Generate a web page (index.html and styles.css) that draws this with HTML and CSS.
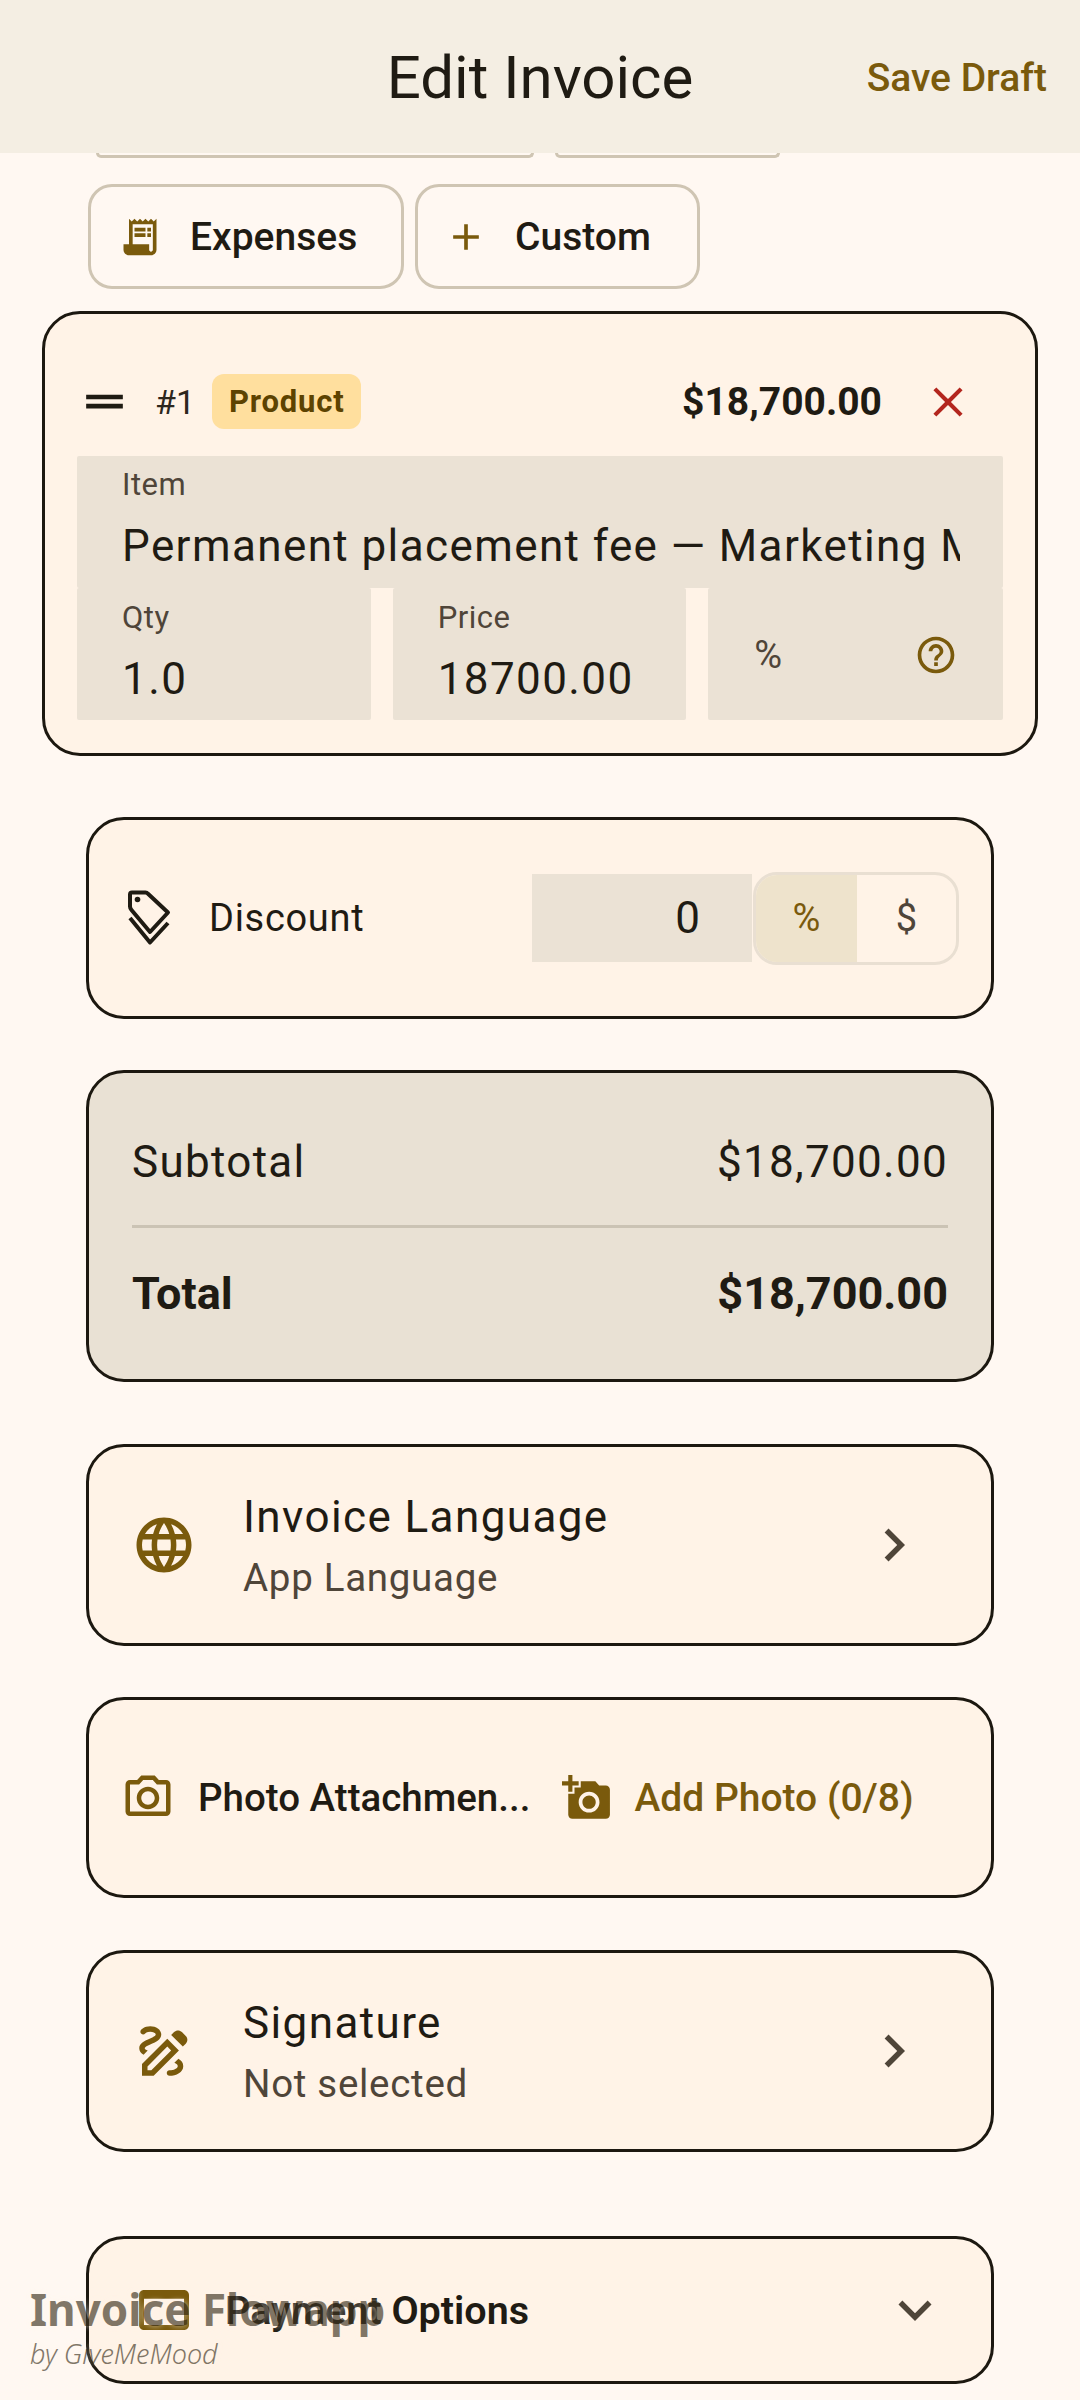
FILE: index.html
```html
<!DOCTYPE html>
<html lang="en">
<head>
    <meta charset="UTF-8">
    <meta name="viewport" content="width=device-width, initial-scale=1.0">
    <title>Edit Invoice</title>
    <link rel="stylesheet" href="styles.css">
</head>
<body>
    <header class="app-bar">
        <h1>Edit Invoice</h1>
        <span class="save-draft">Save Draft</span>
    </header>

    <main class="content">
        <!-- first chip row is scrolled under the app bar -->
        <div class="chip-stubs">
            <span class="stub stub-wide"></span>
            <span class="stub stub-small"></span>
        </div>

        <div class="chips">
            <div class="chip chip-expenses">
                <svg class="chip-icon" viewBox="0 0 24 24"><path d="M19.5 3.5 18 2l-1.5 1.5L15 2l-1.5 1.5L12 2l-1.5 1.5L9 2 7.5 3.5 6 2v14H3v3c0 1.66 1.34 3 3 3h12c1.66 0 3-1.34 3-3V2l-1.5 1.5zM19 19c0 .55-.45 1-1 1s-1-.45-1-1v-3H8V5h11v14z"/><path d="M9 7h6v2H9zm7 0h2v2h-2zM9 10h6v2H9zm7 0h2v2h-2z"/></svg>
                <span>Expenses</span>
            </div>
            <div class="chip chip-custom">
                <svg class="chip-icon" viewBox="0 0 24 24"><path d="M19 13h-6v6h-2v-6H5v-2h6V5h2v6h6v2z"/></svg>
                <span>Custom</span>
            </div>
        </div>

        <section class="card item-card">
            <div class="item-top">
                <svg class="drag-icon" viewBox="0 0 24 24"><path d="M20 9H4v2h16V9zM4 15h16v-2H4v2z"/></svg>
                <span class="item-num">#1</span>
                <span class="badge">Product</span>
                <span class="item-amount">$18,700.00</span>
                <svg class="close-icon" viewBox="0 0 24 24"><path d="M19 6.41 17.59 5 12 10.59 6.41 5 5 6.41 10.59 12 5 17.59 6.41 19 12 13.41 17.59 19 19 17.59 13.41 12z"/></svg>
            </div>
            <div class="field field-item">
                <label>Item</label>
                <div class="field-value">Permanent placement fee — Marketing Manager</div>
            </div>
            <div class="field-row">
                <div class="field">
                    <label>Qty</label>
                    <div class="field-value">1.0</div>
                </div>
                <div class="field">
                    <label>Price</label>
                    <div class="field-value">18700.00</div>
                </div>
                <div class="field field-tax">
                    <span>%</span>
                    <svg class="help-icon" viewBox="0 0 24 24"><path d="M11 18h2v-2h-2v2zm1-16C6.48 2 2 6.48 2 12s4.48 10 10 10 10-4.48 10-10S17.52 2 12 2zm0 18c-4.41 0-8-3.59-8-8s3.59-8 8-8 8 3.59 8 8-3.59 8-8 8zm0-14c-2.21 0-4 1.79-4 4h2c0-1.1.9-2 2-2s2 .9 2 2c0 2-3 1.75-3 5h2c0-2.25 3-2.5 3-5 0-2.21-1.79-4-4-4z"/></svg>
                </div>
            </div>
        </section>

        <section class="card row-card discount-card">
            <svg class="tag-icon" viewBox="0 0 48 60"><path d="M5 6.5c0-1.2.8-2 2-2h13.5c1 0 1.800.4 2.500 1.200L43 24.500 25 44 6.500 22c-1-1.200-1.500-2.200-1.500-3.500z"/><path d="M5 30 25 54.500 43 35"/><circle cx="12.500" cy="11.500" r="2.800"/></svg>
            <span class="discount-label">Discount</span>
            <div class="discount-input">0</div>
            <div class="toggle">
                <span class="toggle-on">%</span>
                <span class="toggle-off">$</span>
            </div>
        </section>

        <section class="card summary-card">
            <div class="summary-row">
                <span>Subtotal</span>
                <span>$18,700.00</span>
            </div>
            <div class="summary-line"></div>
            <div class="summary-row summary-total">
                <span>Total</span>
                <span>$18,700.00</span>
            </div>
        </section>

        <section class="card row-card language-card">
            <svg class="lead-icon" viewBox="0 0 24 24"><path d="M11.99 2C6.47 2 2 6.48 2 12s4.470 10 9.990 10C17.520 22 22 17.520 22 12S17.520 2 11.990 2zm6.930 6h-2.950c-.32-1.250-.78-2.450-1.380-3.560 1.840.63 3.370 1.910 4.330 3.560zM12 4.040c.83 1.200 1.480 2.530 1.910 3.960h-3.820c.43-1.430 1.080-2.760 1.910-3.960zM4.260 14C4.100 13.360 4 12.690 4 12s.1-1.360.26-2h3.380c-.08.66-.14 1.320-.14 2 0 .68.06 1.340.14 2H4.260zm.82 2h2.950c.32 1.250.78 2.450 1.380 3.560-1.840-.63-3.370-1.900-4.330-3.560zm2.950-8H5.080c.96-1.660 2.490-2.930 4.330-3.560C8.810 5.550 8.350 6.750 8.030 8zM12 19.960c-.83-1.200-1.480-2.530-1.910-3.960h3.820c-.43 1.430-1.080 2.760-1.910 3.960zM14.340 14H9.660c-.09-.66-.16-1.320-.16-2 0-.68.07-1.350.16-2h4.680c.09.65.16 1.320.16 2 0 .68-.07 1.340-.16 2zm.25 5.560c.6-1.110 1.060-2.310 1.380-3.560h2.950c-.96 1.650-2.490 2.930-4.330 3.560zM16.360 14c.08-.66.14-1.320.14-2 0-.68-.06-1.340-.14-2h3.380c.16.64.26 1.310.26 2s-.1 1.360-.26 2h-3.380z"/></svg>
            <div class="row-text">
                <div class="row-title">Invoice Language</div>
                <div class="row-sub">App Language</div>
            </div>
            <svg class="chevron" viewBox="0 0 24 24"><path d="M10 6 8.590 7.410 13.170 12l-4.580 4.590L10 18l6-6z"/></svg>
        </section>

        <section class="card row-card photo-card">
            <svg class="camera-icon" viewBox="0 0 24 24"><path d="M14.120 4l1.830 2H20v12H4V6h4.050l1.830-2h4.240M15 2H9L7.170 4H4c-1.100 0-2 .9-2 2v12c0 1.100.9 2 2 2h16c1.100 0 2-.9 2-2V6c0-1.100-.9-2-2-2h-3.170L15 2zm-3 5c-2.760 0-5 2.240-5 5s2.240 5 5 5 5-2.240 5-5-2.240-5-5-5zm0 8c-1.650 0-3-1.350-3-3s1.350-3 3-3 3 1.350 3 3-1.350 3-3 3z"/></svg>
            <span class="photo-label">Photo Attachmen...</span>
            <svg class="add-photo-icon" viewBox="0 0 24 24"><path d="M3 4V1h2v3h3v2H5v3H3V6H0V4h3zm3 6V7h3V4h7l1.830 2H21c1.100 0 2 .9 2 2v12c0 1.100-.9 2-2 2H5c-1.100 0-2-.9-2-2V10h3zm7 9c2.760 0 5-2.240 5-5s-2.240-5-5-5-5 2.240-5 5 2.240 5 5 5zm-3.200-5c0 1.770 1.430 3.200 3.200 3.200s3.200-1.430 3.200-3.200-1.430-3.200-3.200-3.200-3.200 1.430-3.200 3.200z"/></svg>
            <span class="add-photo">Add Photo (0/8)</span>
        </section>

        <section class="card row-card signature-card">
            <svg class="lead-icon" viewBox="0 0 24 24"><path fill-rule="evenodd" d="M18.850 10.390l1.060-1.060c.78-.78.78-2.050 0-2.830L18.500 5.090c-.78-.78-2.050-.78-2.830 0l-1.060 1.060 4.240 4.240zm-5.660-2.830L4 16.760V21h4.240l9.190-9.190-4.240-4.250zM13.200 10.400l1.400 1.400L7.400 19H6v-1.400zM19 17.500c0 2.190-2.540 3.500-5 3.500-.55 0-1-.45-1-1s.45-1 1-1c1.540 0 3-.73 3-1.500 0-.47-.48-.87-1.230-1.200l1.480-1.480c1.070.63 1.750 1.470 1.750 2.680zM4.580 13.350C3.610 12.790 3 12.060 3 11c0-1.800 1.890-2.630 3.560-3.360C7.590 7.180 9 6.560 9 6c0-.41-.78-1-2-1-1.260 0-1.800.61-1.830.64-.35.41-.98.46-1.400.12-.41-.34-.49-.95-.15-1.380C3.730 4.240 4.760 3 7 3s4 1.320 4 3c0 1.870-1.930 2.720-3.640 3.470C6.420 9.880 5 10.500 5 11c0 .31.43.6 1.070.86l-1.490 1.490z"/></svg>
            <div class="row-text">
                <div class="row-title">Signature</div>
                <div class="row-sub">Not selected</div>
            </div>
            <svg class="chevron" viewBox="0 0 24 24"><path d="M10 6 8.590 7.410 13.170 12l-4.580 4.590L10 18l6-6z"/></svg>
        </section>

        <section class="card row-card payment-card">
            <svg class="card-icon" viewBox="0 0 24 24"><path d="M20 4H4c-1.110 0-1.990.89-1.990 2L2 18c0 1.110.89 2 2 2h16c1.110 0 2-.89 2-2V6c0-1.110-.89-2-2-2zm0 14H4V6h16v12zM4 6h16v1.500H4z"/></svg>
            <span class="payment-label">Payment Options</span>
            <svg class="chevron-down" viewBox="0 0 24 24"><path d="M16.590 8.590 12 13.170 7.410 8.590 6 10l6 6 6-6z"/></svg>
        </section>
    </main>

    <div class="watermark">
        <div class="watermark-name">Invoice Flowapp</div>
        <div class="watermark-by">by GiveMeMood</div>
    </div>
</body>
</html>
```

FILE: styles.css
```css
* {
    margin: 0;
    padding: 0;
    box-sizing: border-box;
}
html, body {
    height: 2400px;
    overflow: hidden;
}
body {
    font-family: Roboto, Arial, sans-serif;
    background: #fff8f2;
    color: #1f1b13;
    position: relative;
}
svg {
    display: block;
    flex-shrink: 0;
    fill: #7a5a0c;
}

/* app bar */
.app-bar {
    height: 153px;
    background: #f4eee3;
    display: flex;
    align-items: center;
    justify-content: center;
    position: relative;
}
.app-bar h1 {
    font-size: 60px;
    font-weight: 400;
    margin-top: 2px;
}
.save-draft {
    position: absolute;
    right: 33px;
    top: 55px;
    font-size: 39px;
    font-weight: 500;
    color: #7a5a0c;
}

/* chips */
.chip-stubs {
    display: flex;
    height: 5px;
    padding-left: 96px;
    gap: 21px;
}
.stub {
    height: 5px;
    border: 3px solid #cfc5b3;
    border-top: none;
    border-radius: 0 0 14px 14px;
}
.stub-wide {
    width: 438px;
}
.stub-small {
    width: 225px;
}
.chips {
    display: flex;
    gap: 11px;
    margin-top: 26px;
    padding-left: 88px;
}
.chip {
    height: 105px;
    border: 3px solid #cfc5b3;
    border-radius: 24px;
    display: flex;
    align-items: center;
    font-size: 39px;
    font-weight: 500;
}
.chip-expenses {
    width: 316px;
    padding-left: 27px;
    gap: 28px;
}
.chip-custom {
    width: 285px;
    padding-left: 26px;
    gap: 27px;
}
.chip-icon {
    width: 44px;
    height: 44px;
}

/* cards */
.card {
    background: #fff3e7;
    border: 3px solid #1c1810;
    border-radius: 38px;
}
.row-card {
    display: flex;
    align-items: center;
    width: 908px;
    margin-left: 86px;
}

/* item card */
.item-card {
    width: 996px;
    height: 445px;
    margin: 22px 0 0 42px;
    padding: 60px 32px 0 32px;
}
.item-top {
    display: flex;
    align-items: center;
    height: 55px;
    margin-bottom: 27px;
}
.drag-icon {
    width: 55px;
    height: 55px;
    fill: #1f1b13;
}
.item-num {
    font-size: 34px;
    margin-left: 23px;
    color: #2d271d;
}
.badge {
    height: 55px;
    margin-left: 17px;
    padding: 0 17px;
    background: #ffdf9e;
    border-radius: 12px;
    color: #5d4300;
    font-size: 31px;
    font-weight: 700;
    line-height: 55px;
    letter-spacing: 0.8px;
}
.item-amount {
    margin-left: auto;
    font-size: 39px;
    font-weight: 700;
}
.close-icon {
    width: 50px;
    height: 50px;
    margin: 0 30px 0 41px;
    fill: #b3261e;
}
.field {
    background: #ebe2d5;
    border-radius: 2px;
    padding-left: 45px;
}
.field label {
    display: block;
    font-size: 31px;
    color: #4f4539;
    letter-spacing: 0.5px;
}
.field-value {
    font-size: 44px;
    letter-spacing: 1.4px;
    white-space: nowrap;
    overflow: hidden;
}
.field-item {
    height: 132px;
    padding-top: 10px;
    padding-right: 43px;
}
.field-item .field-value {
    margin-top: 17px;
}
.field-row {
    display: flex;
    gap: 22px;
}
.field-row .field {
    flex: 1;
    height: 132px;
    padding-top: 11px;
}
.field-row .field-value {
    margin-top: 17px;
}
.field-row .field-tax {
    display: flex;
    align-items: center;
    padding: 2px 0 0 46px;
    font-size: 38px;
    color: #4f4539;
}
.help-icon {
    width: 44px;
    height: 44px;
    margin-left: auto;
    margin-right: 45px;
}

/* discount */
.discount-card {
    height: 202px;
    margin-top: 61px;
}
.tag-icon {
    width: 48px;
    height: 60px;
    margin-left: 36px;
    fill: none;
    stroke: #1f1b13;
    stroke-width: 4;
    stroke-linejoin: round;
}
.tag-icon circle {
    fill: #1f1b13;
    stroke: none;
}
.discount-label {
    margin-left: 36px;
    font-size: 38px;
    letter-spacing: 0.7px;
}
.discount-input {
    width: 220px;
    height: 88px;
    margin-left: auto;
    padding-right: 52px;
    background: #ebe2d5;
    text-align: right;
    font-size: 44px;
    line-height: 88px;
}
.toggle {
    display: flex;
    width: 206px;
    height: 93px;
    margin: 0 32px 0 1px;
    border: 3px solid #e9dfd2;
    border-radius: 24px;
    overflow: hidden;
    font-size: 38px;
    text-align: center;
    line-height: 87px;
}
.toggle-on {
    width: 101px;
    background: #eee3cc;
    color: #7a5a0c;
}
.toggle-off {
    flex: 1;
    color: #4f4539;
}

/* summary */
.summary-card {
    width: 908px;
    height: 312px;
    margin: 51px 0 0 86px;
    padding: 0 43px;
    background: #e9e1d4;
}
.summary-row {
    display: flex;
    justify-content: space-between;
    align-items: center;
    height: 90px;
    margin-top: 44px;
    font-size: 44px;
    letter-spacing: 1.3px;
}
.summary-line {
    height: 3px;
    margin-top: 18px;
    background: #cbc3b4;
}
.summary-total {
    margin-top: 20px;
    font-size: 45px;
    font-weight: 700;
    letter-spacing: 0;
}

/* list rows */
.language-card {
    height: 202px;
    margin-top: 62px;
}
.signature-card {
    height: 202px;
    margin-top: 52px;
}
.lead-icon {
    width: 66px;
    height: 66px;
    margin-left: 42px;
}
.row-text {
    margin-left: 46px;
}
.row-title {
    font-size: 44px;
    letter-spacing: 1.4px;
}
.row-sub {
    margin-top: 12px;
    font-size: 38.500px;
    letter-spacing: 0.7px;
    color: #4f4539;
}
.chevron {
    width: 66px;
    height: 66px;
    margin-left: auto;
    margin-right: 64px;
    fill: #4f4539;
}

/* photos */
.photo-card {
    height: 201px;
    margin-top: 51px;
}
.camera-icon {
    width: 54px;
    height: 54px;
    margin-left: 32px;
}
.photo-label {
    margin-left: 23px;
    font-size: 38.500px;
    font-weight: 500;
    white-space: nowrap;
}
.add-photo-icon {
    width: 50px;
    height: 50px;
    margin-left: 32px;
}
.add-photo {
    margin-left: 22px;
    font-size: 39px;
    font-weight: 500;
    color: #7a5a0c;
}

/* payment */
.payment-card {
    height: 148px;
    margin-top: 84px;
}
.card-icon {
    width: 60px;
    height: 60px;
    margin-left: 45px;
}
.payment-label {
    margin-left: 31px;
    font-size: 39.500px;
    font-weight: 600;
}
.chevron-down {
    width: 66px;
    height: 66px;
    margin-left: auto;
    margin-right: 43px;
    fill: #4f4539;
}

/* watermark sits over the page */
.watermark {
    position: absolute;
    left: 30px;
    top: 2282px;
    opacity: 0.66;
    text-shadow: 0 0 6px rgba(255, 248, 240, 0.9);
    color: #3f3523;
}
.watermark-name {
    font-family: "Noto Sans", sans-serif;
    font-size: 44px;
    font-weight: 700;
    line-height: 54px;
}
.watermark-by {
    font-family: "Noto Sans", sans-serif;
    font-size: 27px;
    font-style: italic;
    font-weight: 300;
    line-height: 36px;
}
```
